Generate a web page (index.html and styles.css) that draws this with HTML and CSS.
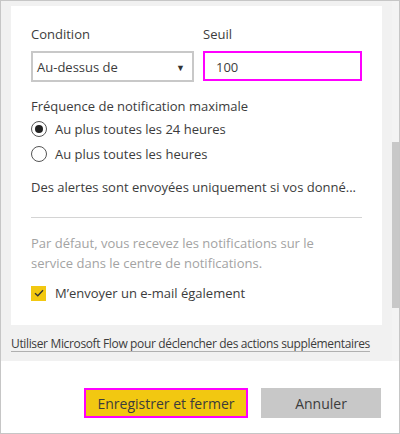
FILE: index.html
```html
<!DOCTYPE html>
<html lang="fr">
<head>
<meta charset="utf-8">
<link rel="stylesheet" href="styles.css">
</head>
<body>
<div class="frame">
  <div class="top">
    <div class="scrollarea">
      <div class="card">
        <div class="row-fields">
          <div class="field">
            <div class="label">Condition</div>
            <div class="select">
              <span>Au-dessus de</span>
              <span class="arrow">▼</span>
            </div>
          </div>
          <div class="field field-right">
            <div class="label">Seuil</div>
            <div class="input">100</div>
          </div>
        </div>
        <div class="label freq">Fréquence de notification maximale</div>
        <div class="radio-row"><span class="radio checked"></span><span>Au plus toutes les 24 heures</span></div>
        <div class="radio-row"><span class="radio"></span><span>Au plus toutes les heures</span></div>
        <div class="note">Des alertes sont envoyées uniquement si vos donné...</div>
        <div class="divider"></div>
        <div class="muted">Par défaut, vous recevez les notifications sur le service dans le centre de notifications.</div>
        <div class="check-row">
          <span class="checkbox"><svg width="10" height="8" viewBox="0 0 10 8"><path d="M1 4.2 L3.8 6.8 L9 1.2" fill="none" stroke="#333" stroke-width="1.3"/></svg></span>
          <span>M’envoyer un e-mail également</span>
        </div>
      </div>
      <a class="flow-link" href="#">Utiliser Microsoft Flow pour déclencher des actions supplémentaires</a>
    </div>
    <div class="scrollbar"><div class="thumb"></div></div>
  </div>
  <div class="actions">
    <button class="btn btn-primary">Enregistrer et fermer</button>
    <button class="btn btn-secondary">Annuler</button>
  </div>
</div>
</body>
</html>
```
FILE: styles.css
```css
html, body {
  margin: 0;
  padding: 0;
  background: #ffffff;
}
body {
  font-family: "Open Sans", "Noto Sans", sans-serif;
  font-size: 13px;
  color: #3c3c3c;
}
.frame {
  width: 400px;
  height: 434px;
  box-sizing: border-box;
  border: 1px solid #c6c6c6;
  display: flex;
  flex-direction: column;
}
.top {
  height: 360px;
  background: #f1f1f1;
  display: flex;
}
.scrollarea {
  flex: 1;
  padding: 5px 0 0 10px;
}
.scrollbar {
  width: 7px;
  padding-top: 141px;
  background: #f3f3f3;
}
.thumb {
  height: 166px;
  background: #c8c8c8;
}
.card {
  width: 371px;
  height: 319px;
  box-sizing: border-box;
  background: #ffffff;
  padding: 18px 20px 0 20px;
}
.row-fields {
  display: flex;
  gap: 9px;
}
.field {
  display: flex;
  flex-direction: column;
}
.label {
  line-height: 20px;
  height: 20px;
}
.field .label {
  margin-bottom: 7px;
}
.select {
  width: 163px;
  height: 31px;
  box-sizing: border-box;
  border: 2px solid #c8c8c8;
  display: flex;
  align-items: center;
  justify-content: space-between;
  padding: 1px 7px 0 4px;
}
.arrow {
  font-size: 9px;
  color: #333;
}
.input {
  width: 159px;
  height: 30px;
  box-sizing: border-box;
  border: 2px solid #ff00ff;
  display: flex;
  align-items: center;
  padding: 1px 0 0 11px;
}
.freq {
  margin-top: 14px;
}
.radio-row {
  display: flex;
  align-items: center;
  gap: 8px;
  height: 25px;
}
.radio {
  width: 16px;
  height: 16px;
  box-sizing: border-box;
  border: 1px solid #555;
  border-radius: 50%;
  display: flex;
  align-items: center;
  justify-content: center;
}
.radio.checked::after {
  content: "";
  width: 8px;
  height: 8px;
  border-radius: 50%;
  background: #222;
}
.note {
  margin-top: 11px;
  line-height: 20px;
  white-space: nowrap;
}
.divider {
  margin-top: 20px;
  height: 1px;
  background: #d4d4d4;
}
.muted {
  margin-top: 15px;
  color: #a3a3a3;
  line-height: 20px;
  width: 290px;
}
.check-row {
  margin-top: 11px;
  display: flex;
  align-items: center;
  gap: 9px;
}
.checkbox {
  width: 15px;
  height: 15px;
  background: #f2c811;
  display: flex;
  align-items: center;
  justify-content: center;
}
.flow-link {
  display: inline-block;
  margin-top: 9px;
  color: #3c3c3c;
  font-size: 12px;
  letter-spacing: -0.35px;
  white-space: nowrap;
  text-decoration: underline;
  text-decoration-color: #b0b0b0;
  text-underline-offset: 3px;
  line-height: 20px;
}
.actions {
  flex: 1;
  display: flex;
  justify-content: flex-end;
  align-items: flex-start;
  gap: 13px;
  padding: 27px 18px 0 0;
}
.btn {
  font-family: "Open Sans", "Noto Sans", sans-serif;
  font-size: 14px;
  color: #3c3c3c;
  border: none;
  height: 30px;
  padding: 0;
  margin: 0;
}
.btn-primary {
  width: 164px;
  background: #f2c811;
  border: 2px solid #ff00ff;
  box-sizing: border-box;
}
.btn-secondary {
  width: 120px;
  background: #c8c8c8;
}
```
